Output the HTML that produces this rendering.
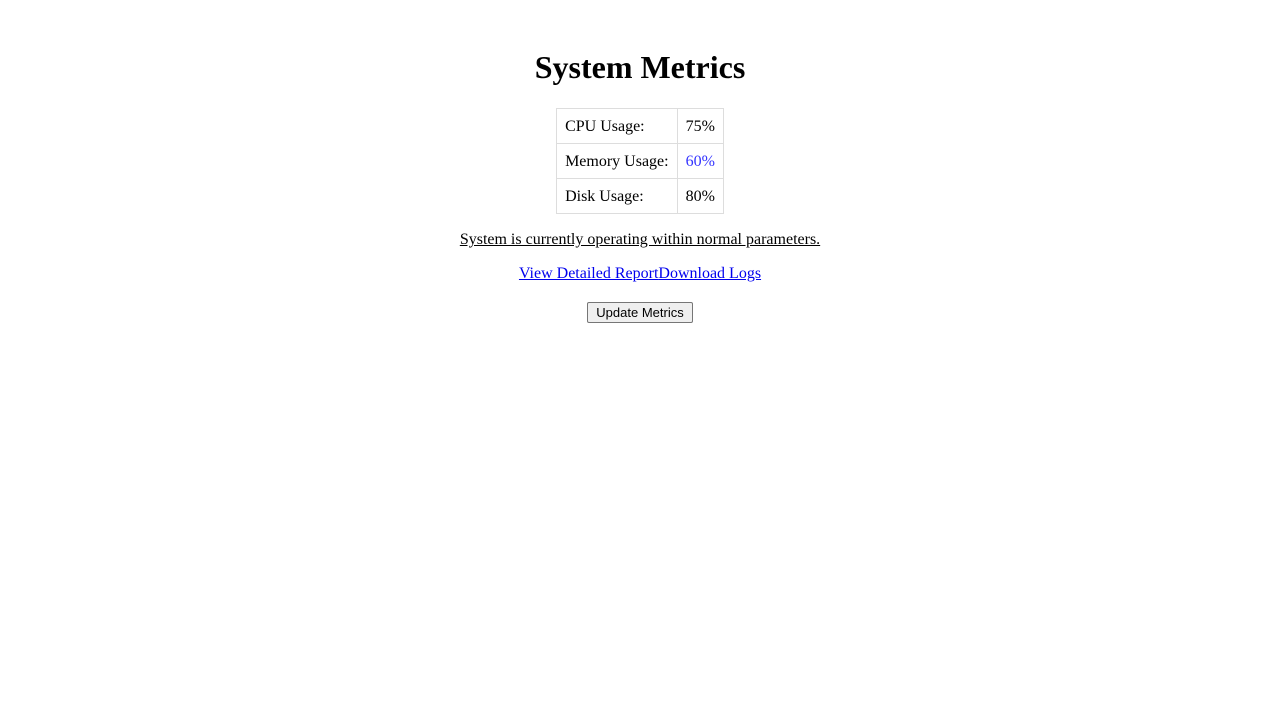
<!DOCTYPE html>
<html><head><style>
body{margin:8px;padding:20px;font-family:"Liberation Serif",serif;font-size:16px;text-align:center;color:#000;background:#fff}
h1{font-size:32px;margin:21.44px 0;line-height:37px}
table{border-collapse:collapse;margin:0 auto}
td{border:1px solid #ddd;padding:9px 8px 7px;text-align:left;line-height:18px}
p{margin:16px 0;line-height:18px;position:relative;top:1px}
a{color:#00e}
.btn{margin-top:20px}
button{font-family:"Liberation Sans",sans-serif;font-size:13px;padding:1px 8px;border:1px solid #767676;border-radius:2px;background:#efefef;color:#000;height:21px}
</style></head><body>
<h1>System Metrics</h1>
<table>
<tr><td>CPU Usage:</td><td>75%</td></tr>
<tr><td>Memory Usage:</td><td style="color:#3333ff">60%</td></tr>
<tr><td>Disk Usage:</td><td>80%</td></tr>
</table>
<p><u>System is currently operating within normal parameters.</u></p>
<p><a href="#">View Detailed Report</a><a href="#">Download Logs</a></p>
<div class="btn"><button>Update Metrics</button></div>
</body></html>
